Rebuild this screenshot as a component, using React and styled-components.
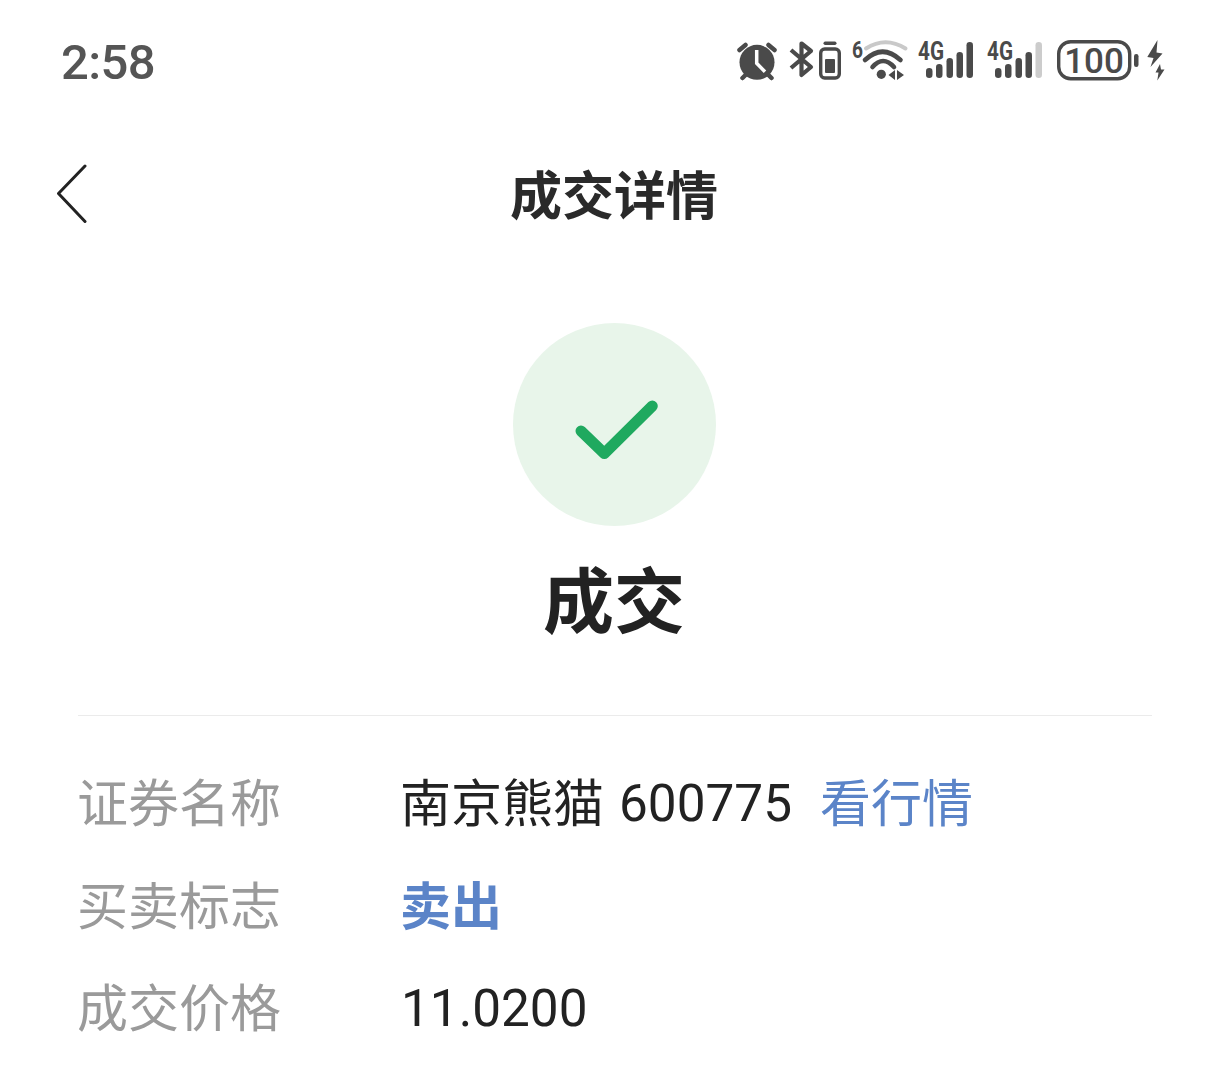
import React from 'react';
import styled, {createGlobalStyle} from 'styled-components';

const GlobalStyle = createGlobalStyle`
  html, body {
    margin: 0;
    padding: 0;
    background: #fff;
  }
  body {
    font-family: Roboto, "Noto Sans CJK SC", sans-serif;
    color: #222;
  }
`;

const Page = styled.div`
  width: 1228px;
  height: 1077px;
  overflow: hidden;
  background: #fff;
`;

const StatusBar = styled.div`
  height: 123px;
  box-sizing: border-box;
  padding: 39px 63px 0 61px;
  display: flex;
  align-items: flex-start;
  justify-content: space-between;
`;

const Time = styled.div`
  font-size: 49px;
  line-height: 48px;
  font-weight: 500;
  letter-spacing: -0.6px;
  color: #555;
`;

const StatusIcons = styled.div`
  display: flex;
  align-items: flex-start;
  margin-top: -1px;
`;

const StatusIcon = styled.svg`
  display: block;
  height: 44px;
  width: ${(p) => p.$w}px;
  margin-left: ${(p) => p.$gap || 0}px;
  overflow: visible;
`;

const NavBar = styled.div`
  position: relative;
  height: 142px;
  display: flex;
  align-items: center;
  justify-content: center;
`;

const BackIcon = styled.svg`
  position: absolute;
  left: 56px;
  top: 41px;
  width: 32px;
  height: 60px;
`;

const NavTitle = styled.div`
  margin-top: -4px;
  font-size: 52px;
  font-weight: 700;
  color: #2a2a2a;
`;

const Result = styled.div`
  padding-top: 58px;
  display: flex;
  flex-direction: column;
  align-items: center;
`;

const Circle = styled.div`
  width: 203px;
  height: 203px;
  border-radius: 50%;
  background: #e8f5ea;
`;

const CheckIcon = styled.svg`
  display: block;
  width: 203px;
  height: 203px;
`;

const ResultTitle = styled.div`
  margin-top: 32px;
  font-size: 71px;
  line-height: 90px;
  font-weight: 700;
  color: #222;
`;

const Divider = styled.div`
  margin: 67px 76px 0 78px;
  height: 1px;
  background: #ebebeb;
`;

const Rows = styled.div`
  padding: 33px 0 0 77px;
`;

const Row = styled.div`
  display: grid;
  grid-template-columns: 323px 1fr;
  align-items: center;
  height: 102.5px;
  font-size: 51px;
`;

const Label = styled.div`
  color: #9a9a9a;
`;

const Value = styled.div`
  display: flex;
  align-items: center;
  color: #222;
`;

const Num = styled.span`
  margin-left: ${(p) => p.$gap || 1}px;
  font-size: 51.3px;
  transform: translateY(3px);
`;

const Link = styled.span`
  margin-left: 28px;
  color: #5b84c8;
`;

const Side = styled.span`
  color: #5b84c8;
  font-weight: 700;
`;

const Ink = '#4a4a4a';

const SignalBars = ({text}) => {
  const bars = [
    {x: 8, y: 30, h: 10, c: Ink},
    {x: 18, y: 26, h: 14, c: Ink},
    {x: 28.5, y: 20, h: 20, c: Ink},
    {x: 38.5, y: 14, h: 26, c: Ink},
    {x: 48.5, y: 4, h: 36, c: text},
  ];
  return (
    <StatusIcon $w={55} $gap={text === Ink ? 12 : 14} viewBox="0 0 55 44">
      <text x="0" y="22" fontFamily="Roboto" fontWeight="700" fontSize="25" fill={Ink} textLength="26" lengthAdjust="spacingAndGlyphs">
        4G
      </text>
      {bars.map((b) => (
        <rect key={b.x} x={b.x} y={b.y} width="6.5" height={b.h} rx="3.2" fill={b.c} />
      ))}
    </StatusIcon>
  );
};

const Alarm = () => (
  <StatusIcon $w={40} viewBox="0 0 40 44">
    <circle cx="21" cy="24.3" r="17.5" fill={Ink} />
    <path d="M3.5 12 L9.5 7 M38.5 12 L32.5 7 M6.5 40 L11 35.5 M35.5 40 L31 35.5" stroke={Ink} strokeWidth="4.5" strokeLinecap="round" fill="none" />
    <path d="M20.7 12 V25.3 L29 33.7" stroke="#fff" strokeWidth="3.5" fill="none" />
  </StatusIcon>
);

const Bluetooth = () => (
  <StatusIcon $w={25} $gap={13} viewBox="0 0 25 44">
    <path d="M2 12 L22 29 L12.5 37 V5.5 L22 13 L2 30" stroke={Ink} strokeWidth="4.2" strokeLinejoin="round" fill="none" />
  </StatusIcon>
);

const SmallBattery = () => (
  <StatusIcon $w={22} $gap={5} viewBox="0 0 22 44">
    <rect x="4.5" y="3.5" width="13" height="3.5" rx="1.7" fill={Ink} />
    <rect x="1.7" y="11" width="18.6" height="29" rx="4" stroke={Ink} strokeWidth="3.4" fill="none" />
    <rect x="6" y="21" width="10" height="14" rx="1" fill={Ink} />
  </StatusIcon>
);

const Wifi = () => (
  <StatusIcon $w={54} $gap={11} viewBox="0 0 54 44">
    <text x="0" y="20" fontFamily="Roboto" fontWeight="700" fontSize="23" fill={Ink} textLength="11" lengthAdjust="spacingAndGlyphs">
      6
    </text>
    <path d="M14 10.5 Q33.5 -2 53.5 10.5" stroke="#c9c9c9" strokeWidth="4" strokeLinecap="round" fill="none" />
    <path d="M13 22 Q30.5 5.5 48.5 22" stroke={Ink} strokeWidth="4.6" strokeLinecap="round" fill="none" />
    <path d="M20.5 29 Q31 17 42 29" stroke={Ink} strokeWidth="4.6" strokeLinecap="round" fill="none" />
    <circle cx="29.3" cy="36.3" r="4.6" fill={Ink} />
    <path d="M36.5 37 L43 32 V42 Z M45 32 L52 37 L45 42 Z" fill={Ink} />
  </StatusIcon>
);

const BigBattery = () => (
  <StatusIcon $w={81} $gap={15} viewBox="0 0 81 44">
    <rect x="1.7" y="3.7" width="71" height="37" rx="12" stroke={Ink} strokeWidth="3.4" fill="none" />
    <text x="37" y="35" textAnchor="middle" fontFamily="Roboto" fontWeight="500" fontSize="35" fill={Ink}>
      100
    </text>
    <rect x="77" y="16" width="4.5" height="13" rx="2.2" fill={Ink} />
  </StatusIcon>
);

const Charging = () => (
  <StatusIcon $w={18} $gap={9} viewBox="0 0 18 44">
    <path d="M10.5 2 L0.3 19 L6.5 20 L3.5 29 L15.5 15.5 L9.5 14.5 Z" fill={Ink} />
    <path d="M13 26 L8.5 34.5 L11.5 34.5 L10.3 42.5 L17.5 31.5 L14 31.5 Z" fill={Ink} />
  </StatusIcon>
);

const App = () => (
  <Page>
    <GlobalStyle />
    <StatusBar>
      <Time>2:58</Time>
      <StatusIcons>
        <Alarm />
        <Bluetooth />
        <SmallBattery />
        <Wifi />
        <SignalBars text={Ink} />
        <SignalBars text="#cccccc" />
        <BigBattery />
        <Charging />
      </StatusIcons>
    </StatusBar>
    <NavBar>
      <BackIcon viewBox="0 0 32 60">
        <path d="M29 2 L2.5 29.5 L29 57.5" stroke="#222" strokeWidth="3" strokeLinecap="round" strokeLinejoin="round" fill="none" />
      </BackIcon>
      <NavTitle>成交详情</NavTitle>
    </NavBar>
    <Result>
      <Circle>
        <CheckIcon viewBox="0 0 203 203">
          <path d="M68 108 L91.3 130.5 L139.3 83" stroke="#1fa95f" strokeWidth="11" strokeLinecap="round" strokeLinejoin="round" fill="none" />
        </CheckIcon>
      </Circle>
      <ResultTitle>成交</ResultTitle>
    </Result>
    <Divider />
    <Rows>
      <Row>
        <Label>证券名称</Label>
        <Value>
          南京熊猫<Num $gap={15}>600775</Num>
          <Link>看行情</Link>
        </Value>
      </Row>
      <Row>
        <Label>买卖标志</Label>
        <Value>
          <Side>卖出</Side>
        </Value>
      </Row>
      <Row>
        <Label>成交价格</Label>
        <Value>
          <Num>11.0200</Num>
        </Value>
      </Row>
    </Rows>
  </Page>
);

export default App;
